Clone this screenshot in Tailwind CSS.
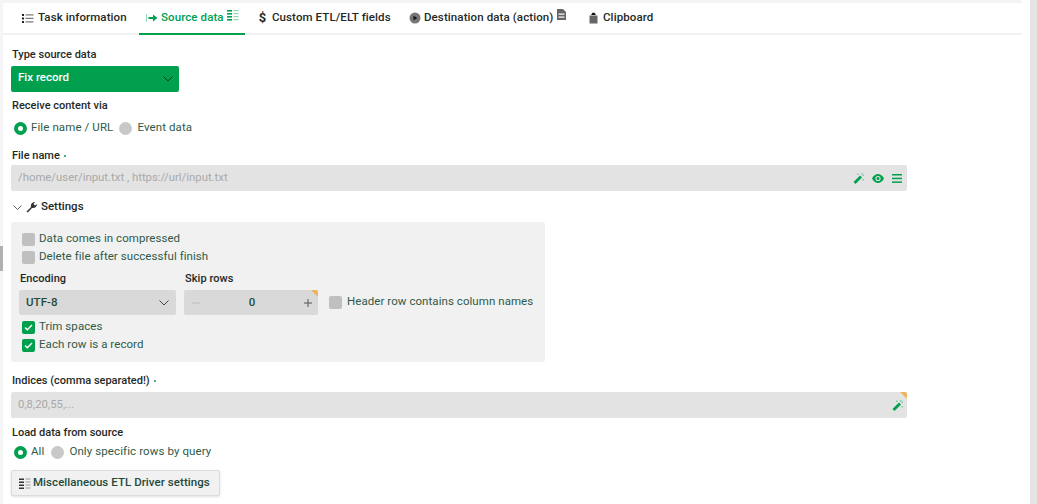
<!DOCTYPE html>
<html lang="en">

<head>
  <meta charset="UTF-8">
  <title>Source data</title>
  <script src="https://cdn.jsdelivr.net/npm/@tailwindcss/browser@4"></script>
</head>

<body class="bg-white font-['Roboto',sans-serif] text-[11px] text-[#1f2a26] overflow-hidden">
  <div class="relative w-[1037px] h-[504px] overflow-hidden flex">
    <!-- left gutter with scroll thumb -->
    <div class="w-[3px] bg-[#f5f5f5] relative">
      <div class="absolute left-0 top-[246px] w-[3px] h-[25px] bg-[#b0b0b0]"></div>
    </div>

    <div class="w-[1027px] flex flex-col">
      <div class="w-[1019px] h-[3px] bg-[#f4f4f4]"></div>

      <!-- Tabs -->
      <div class="w-[1019px] h-[32px] flex items-stretch border-b-2 border-[#f2f2f2] font-medium text-[11.5px] tracking-[0.1px]">
        <div class="w-[136px] flex items-center pl-[19px] gap-[4px]">
          <svg width="12" height="11" viewBox="0 0 12 11" fill="#222"><rect x="0" y="1" width="2" height="2"/><rect x="0" y="4.5" width="2" height="2"/><rect x="0" y="8" width="2" height="2"/><rect x="3.5" y="1.3" width="8" height="1.2" fill="#777"/><rect x="3.5" y="4.8" width="8" height="1.2" fill="#777"/><rect x="3.5" y="8.3" width="8" height="1.2" fill="#777"/></svg>
          <span>Task information</span>
        </div>
        <div class="w-[106px] -mb-[2px] flex items-center pl-[7px] gap-[3px] border-b-2 border-[#00a04f] text-[#00a04f]">
          <svg width="12" height="10" viewBox="0 0 12 10" fill="#00a04f"><rect x="0" y="1" width="1" height="8" opacity=".4"/><rect x="2.5" y="4" width="5" height="2"/><path d="M7 1.5 L11.5 5 L7 8.5Z"/></svg>
          <span>Source data</span>
          <svg class="-mt-[6px]" width="12" height="11" viewBox="0 0 12 11"><g fill="#00a04f"><rect x="0" y="0" width="5" height="1.6"/><rect x="0" y="3" width="5" height="1.6"/><rect x="0" y="6" width="5" height="1.6"/><rect x="0" y="9" width="5" height="1.6"/></g><g fill="#8fd6ae"><rect x="6.5" y="0" width="5" height="1.2"/><rect x="6.5" y="3" width="5" height="1.2"/><rect x="6.5" y="6" width="5" height="1.2"/><rect x="6.5" y="9" width="5" height="1.2"/></g></svg>
        </div>
        <div class="w-[151px] flex items-center pl-[13px] gap-[5px]">
          <span class="text-[13px] font-bold w-[9px] text-center">$</span>
          <span>Custom ETL/ELT fields</span>
        </div>
        <div class="w-[179px] flex items-center pl-[13px] gap-[3px]">
          <svg width="12" height="12" viewBox="0 0 12 12"><circle cx="6" cy="6" r="5.5" fill="#777"/><path d="M4.5 3.8 L8.3 6 L4.5 8.2Z" fill="#111"/></svg>
          <span>Destination data (action)</span>
          <svg class="-mt-[7px] ml-[1px]" width="9" height="11" viewBox="0 0 9 11"><path d="M0 0H6L9 3V11H0Z" fill="#666"/><rect x="1.5" y="4.5" width="6" height="1.2" fill="#fff"/><rect x="1.5" y="7.5" width="6" height="1.2" fill="#fff"/></svg>
        </div>
        <div class="flex items-center pl-[14px] gap-[5px]">
          <svg width="9" height="12" viewBox="0 0 9 12"><path d="M0.5 3.5H8.5V11.5H0.5Z" fill="#666"/><path d="M2 3L3.5 0.7H5.5L7 3Z" fill="#111"/></svg>
          <span>Clipboard</span>
        </div>
      </div>

      <!-- Form -->
      <div class="flex flex-col pl-[8px]">
        <label class="ml-[1px] mt-[13px] h-[14px] leading-[14px] font-medium">Type source data</label>
        <div class="mt-[4px] w-[168px] h-[26px] bg-[#00a04f] rounded-[2px] flex items-center justify-between pl-[7px] pr-[6px] text-white font-medium text-[11.5px]">
          <span class="-mt-[2px]">Fix record</span>
          <svg width="10" height="6" viewBox="0 0 10 6" fill="none" stroke="#0b3d24" stroke-width="1"><path d="M0.5 0.5L5 5L9.5 0.5"/></svg>
        </div>

        <label class="ml-[1px] mt-[7px] h-[14px] leading-[14px] font-medium">Receive content via</label>
        <div class="mt-[8px] h-[14px] flex items-center text-[11.5px] tracking-[0.1px] text-[#2f5a49]">
          <span class="ml-[3px] w-[13px] h-[13px] rounded-full border-[4px] border-[#00a04f] bg-white"></span>
          <span class="ml-[4px]">File name / URL</span>
          <span class="ml-[6px] w-[13px] h-[13px] rounded-full bg-[#c8c8c8]"></span>
          <span class="ml-[5px]">Event data</span>
        </div>

        <label class="ml-[1px] mt-[14px] h-[14px] leading-[14px] font-medium flex items-center gap-[4px]">File name <span class="w-[2px] h-[2px] rounded-full bg-[#00a04f]"></span></label>
        <div class="mt-[2px] w-[896px] h-[26px] bg-[#e3e3e3] rounded-[2px] flex items-center justify-between pl-[7px] pr-[4px] text-[#a9a9a9] text-[11.35px]">
          <span>/home/user/input.txt , https://url/input.txt</span>
          <div class="flex items-center gap-[8px]">
            <svg width="11" height="11" viewBox="0 0 11 11"><path d="M0.5 9L7 2.5L9 4.5L2.5 11Z" fill="#00a04f"/><g fill="#7fcda4"><rect x="8" y="0" width="1.5" height="1.5"/><rect x="9.5" y="1.5" width="1.5" height="1.5"/><rect x="4" y="0.5" width="1.5" height="1.5"/><rect x="9.5" y="6" width="1.5" height="1.5"/></g></svg>
            <svg width="12" height="9" viewBox="0 0 12 9"><path d="M0 4.5C2 1 4 0 6 0s4 1 6 4.5C10 8 8 9 6 9S2 8 0 4.5Z" fill="#00a04f"/><circle cx="6" cy="4.5" r="2.6" fill="#e3e3e3"/><circle cx="6" cy="4.5" r="1.5" fill="#00a04f"/></svg>
            <svg width="11" height="9" viewBox="0 0 11 9" fill="#00a04f"><rect width="10" height="1.5"/><rect y="3.7" width="10" height="1.5"/><rect y="7.4" width="10" height="1.5"/></svg>
          </div>
        </div>

        <div class="mt-[8px] h-[16px] flex items-center font-medium text-[11.5px]">
          <svg class="ml-[2px]" width="9" height="5" viewBox="0 0 9 5" fill="none" stroke="#555" stroke-width="0.9"><path d="M0.5 0.5L4.5 4.5L8.5 0.5"/></svg>
          <svg class="ml-[4px]" width="12" height="12" viewBox="0 0 12 12"><path d="M0.5 10.5L5 6C4.4 3.5 6 1 9 1L7.5 3L9 4.5L11 3C11 6 8.5 7.6 6 7L1.8 11.5Z" fill="#333"/></svg>
          <span class="ml-[3px]">Settings</span>
        </div>

        <!-- Settings panel -->
        <div class="mt-[7px] w-[534px] h-[140px] bg-[#f1f1f1] rounded-[2px] flex flex-col pl-[8px] text-[11.5px] tracking-[0.06px] text-[#2f5a49]">
          <div class="mt-[10px] h-[14px] flex items-center pl-[3px] gap-[4px]">
            <span class="w-[13px] h-[13px] rounded-[2px] bg-[#c0c0c0]"></span>
            <span>Data comes in compressed</span>
          </div>
          <div class="mt-[4px] h-[14px] flex items-center pl-[3px] gap-[4px]">
            <span class="w-[13px] h-[13px] rounded-[2px] bg-[#c0c0c0]"></span>
            <span>Delete file after successful finish</span>
          </div>

          <div class="mt-[8px] flex items-end">
            <div class="w-[165px]">
              <div class="ml-[1px] h-[14px] leading-[14px] text-[11px] font-medium text-[#1f2a26]">Encoding</div>
              <div class="mt-[4px] w-[157px] h-[25px] bg-[#d9d9d9] rounded-[2px] flex items-center justify-between pl-[7px] pr-[7px] font-medium text-[#1f4a3a]">
                <span>UTF-8</span>
                <svg width="10" height="6" viewBox="0 0 10 6" fill="none" stroke="#444" stroke-width="1"><path d="M0.5 0.5L5 5L9.5 0.5"/></svg>
              </div>
            </div>
            <div class="w-[135px]">
              <div class="ml-[1px] h-[14px] leading-[14px] text-[11px] font-medium text-[#1f2a26]">Skip rows</div>
              <div class="relative mt-[4px] w-[134px] h-[25px] bg-[#d9d9d9] rounded-[2px] flex items-center justify-between pl-[8px] pr-[6px] overflow-hidden font-medium text-[#1f4a3a]">
                <svg width="8" height="8" viewBox="0 0 8 8"><rect y="3.5" width="8" height="1" fill="#bdbdbd"/></svg>
                <span>0</span>
                <svg width="8" height="8" viewBox="0 0 8 8"><path d="M0 3.5H3.5V0H4.5V3.5H8V4.5H4.5V8H3.5V4.5H0Z" fill="#555"/></svg>
                <span class="absolute top-0 right-0 border-t-[7px] border-l-[7px] border-t-[#f0b45e] border-l-transparent"></span>
              </div>
            </div>
            <div class="h-[25px] flex items-center ml-[10px] gap-[5px]">
              <span class="w-[13px] h-[13px] rounded-[2px] bg-[#c0c0c0]"></span>
              <span class="-mt-[1px]">Header row contains column names</span>
            </div>
          </div>

          <div class="mt-[5px] h-[14px] flex items-center pl-[3px] gap-[4px]">
            <span class="w-[13px] h-[13px] rounded-[2px] bg-[#00a04f] flex items-center justify-center">
              <svg width="9" height="7" viewBox="0 0 9 7" fill="none" stroke="#fff" stroke-width="1.4"><path d="M1 3.5L3.3 5.7L8 1"/></svg>
            </span>
            <span>Trim spaces</span>
          </div>
          <div class="mt-[4px] h-[14px] flex items-center pl-[3px] gap-[4px]">
            <span class="w-[13px] h-[13px] rounded-[2px] bg-[#00a04f] flex items-center justify-center">
              <svg width="9" height="7" viewBox="0 0 9 7" fill="none" stroke="#fff" stroke-width="1.4"><path d="M1 3.5L3.3 5.7L8 1"/></svg>
            </span>
            <span>Each row is a record</span>
          </div>
        </div>

        <label class="ml-[1px] mt-[12px] h-[14px] leading-[14px] font-medium flex items-center gap-[4px]">Indices (comma separated!) <span class="w-[2px] h-[2px] rounded-full bg-[#00a04f]"></span></label>
        <div class="relative mt-[4px] w-[896px] h-[26px] bg-[#e3e3e3] rounded-[2px] flex items-center justify-between pl-[7px] pr-[4px] text-[#a9a9a9] text-[11.35px] overflow-hidden">
          <span>0,8,20,55,...</span>
          <svg width="11" height="11" viewBox="0 0 11 11"><path d="M0.5 9L7 2.5L9 4.5L2.5 11Z" fill="#00a04f"/><g fill="#7fcda4"><rect x="8" y="0" width="1.5" height="1.5"/><rect x="9.5" y="1.5" width="1.5" height="1.5"/><rect x="4" y="0.5" width="1.5" height="1.5"/><rect x="9.5" y="6" width="1.5" height="1.5"/></g></svg>
          <span class="absolute top-0 right-0 border-t-[7px] border-l-[7px] border-t-[#f0b45e] border-l-transparent"></span>
        </div>

        <label class="ml-[1px] mt-[8px] h-[14px] leading-[14px] font-medium">Load data from source</label>
        <div class="mt-[5px] h-[14px] flex items-center text-[11.5px] tracking-[0.1px] text-[#2f5a49]">
          <span class="ml-[3px] w-[13px] h-[13px] rounded-full border-[4px] border-[#00a04f] bg-white"></span>
          <span class="ml-[4px]">All</span>
          <span class="ml-[7px] w-[13px] h-[13px] rounded-full bg-[#c8c8c8]"></span>
          <span class="ml-[5px]">Only specific rows by query</span>
        </div>

        <div class="mt-[11px] w-[209px] h-[26px] bg-[#f1f1f1] border border-[#dcdcdc] rounded-[2px] shadow-sm flex items-center pl-[7px] gap-[2px] font-medium text-[11.5px] tracking-[0.06px] text-[#1f4a3a]">
          <svg width="12" height="11" viewBox="0 0 12 11"><g fill="#333"><rect x="0" y="0.5" width="5" height="1.5"/><rect x="0" y="3.5" width="5" height="1.5"/><rect x="0" y="6.5" width="5" height="1.5"/><rect x="0" y="9.5" width="5" height="1.5"/></g><g fill="#999"><rect x="6.5" y="0.5" width="5" height="1"/><rect x="6.5" y="3.5" width="5" height="1"/><rect x="6.5" y="6.5" width="5" height="1"/><rect x="6.5" y="9.5" width="5" height="1"/></g></svg>
          <span>Miscellaneous ETL Driver settings</span>
        </div>
      </div>
    </div>

    <!-- right gutter -->
    <div class="w-[7px] bg-[#e4e4e4]"></div>
  </div>
</body>

</html>
